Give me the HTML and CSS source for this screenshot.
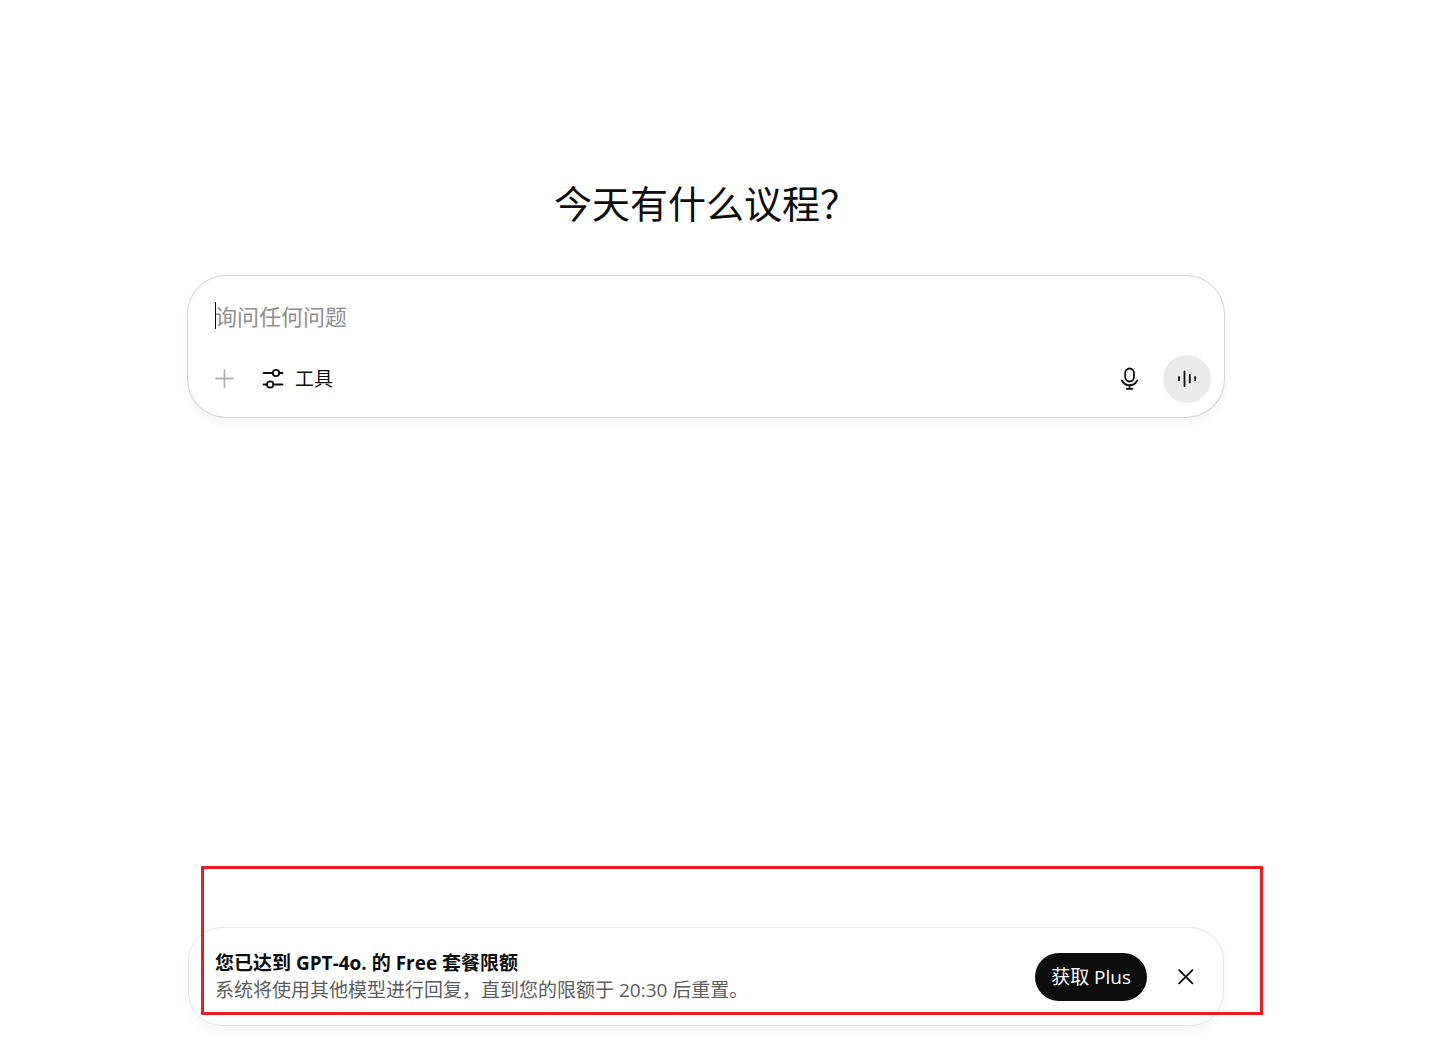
FILE: index.html
```html
<!DOCTYPE html>
<html lang="zh-CN">
<head>
  <meta charset="UTF-8">
  <meta name="viewport" content="width=device-width, initial-scale=1">
  <title>ChatGPT</title>
  <link rel="stylesheet" href="styles.css">
</head>
<body>

  <main class="chat">
    <h1>今天有什么议程？</h1>

    <form class="composer">
      <div class="prompt">
        <textarea rows="1" placeholder="询问任何问题" aria-label="询问任何问题"></textarea>
        <span class="caret"></span>
      </div>

      <div class="actions">
        <button type="button" class="icon-button add" aria-label="添加">
          <svg width="20" height="20" viewBox="0 0 20 20"><path d="M9.500 1V18M1 9.500H18"/></svg>
        </button>
        <button type="button" class="tools">
          <svg width="22" height="22" viewBox="0 0 22 22">
            <path d="M1.500 5H11M17 5H20.500M1.500 16.500H5M11 16.500H20.500"/>
            <circle cx="14" cy="5" r="3.200"/>
            <circle cx="8.200" cy="16.500" r="3.200"/>
          </svg>
          工具
        </button>
        <span class="spacer"></span>
        <button type="button" class="icon-button" aria-label="听写">
          <svg width="24" height="24" viewBox="0 0 24 24">
            <rect x="7.200" y="1.500" width="8.800" height="13" rx="4.400"/>
            <path d="M4 13.500C5.500 16.600 8.200 18.200 11.600 18.200S17.700 16.600 19.200 13.500M11.600 18.200V21.500M8.800 21.800H14.400"/>
          </svg>
        </button>
        <button type="button" class="icon-button voice" aria-label="语音模式">
          <svg width="24" height="24" viewBox="0 0 24 24"><path d="M4 10V13.200M9.500 4.300V19M14.800 8V15.500M20.200 10V13.200"/></svg>
        </button>
      </div>
    </form>

    <section class="banner">
      <div class="message">
        <strong>您已达到 GPT-4o. 的 Free 套餐限额</strong>
        <p>系统将使用其他模型进行回复，直到您的限额于 20:30 后重置。</p>
      </div>
      <button type="button" class="upgrade">获取 Plus</button>
      <button type="button" class="icon-button" aria-label="关闭">
        <svg width="16" height="16" viewBox="0 0 16 16"><path d="M1.200 1.200L14.400 14.400M14.400 1.200L1.200 14.400"/></svg>
      </button>
      <div class="highlight"></div>
    </section>
  </main>

</body>
</html>
```
FILE: styles.css
```css
* {
  box-sizing: border-box;
}

body {
  margin: 0;
  padding-right: 20px;
  background: #fff;
  color: #0d0d0d;
  font-family: "Open Sans", "Noto Sans CJK SC", sans-serif;
  font-size: 19px;
  line-height: 27px;
}

.chat {
  display: flex;
  flex-direction: column;
  max-width: 1036px;
  min-height: 100vh;
  margin: 0 auto;
  padding: 178px 0 36px;
}

h1 {
  margin: 0 0 48px;
  font-size: 38px;
  font-weight: 400;
  line-height: 50px;
  text-align: center;
}

button {
  display: flex;
  align-items: center;
  justify-content: center;
  height: 48px;
  padding: 0;
  border: none;
  border-radius: 24px;
  background: none;
  color: inherit;
  font: inherit;
  cursor: pointer;
}

svg {
  display: block;
  fill: none;
  stroke: currentColor;
  stroke-width: 1.8;
  stroke-linecap: round;
}

.composer {
  padding: 26px 13px 14px;
  border-radius: 38px;
  box-shadow: 0 0 0 1px #d6d6d6, 0 5px 10px rgba(0, 0, 0, 0.05);
}

.prompt {
  position: relative;
  padding: 0 14px 25px;
}

.prompt textarea {
  display: block;
  width: 100%;
  height: 28px;
  padding: 0;
  border: none;
  outline: none;
  resize: none;
  overflow: hidden;
  background: none;
  font: inherit;
  font-size: 22px;
  line-height: 28px;
}

.prompt textarea::placeholder {
  color: #8f8f8f;
}

.caret {
  position: absolute;
  top: 0;
  left: 14px;
  width: 1px;
  height: 27px;
  background: #0d0d0d;
}

.actions {
  display: flex;
}

.icon-button {
  width: 48px;
}

.add {
  color: #b4b4b4;
}

.tools {
  gap: 11px;
  padding: 0 13px;
}

.spacer {
  flex: 1;
}

.voice {
  margin-left: 9px;
  background: #ebebeb;
}

.banner {
  display: flex;
  align-items: center;
  position: relative;
  margin-top: auto;
  padding: 22px 13px 21px 26px;
  border: 1px solid #e5e5e5;
  border-radius: 34px;
  box-shadow: 0 5px 12px rgba(0, 0, 0, 0.04);
}

.message {
  flex: 1;
}

.message strong {
  display: block;
}

.message p {
  margin: 0;
  color: #5d5d5d;
}

.upgrade {
  margin-right: 15px;
  padding: 0 16px;
  background: #0d0d0d;
  color: #fff;
}

/* red frame drawn over the banner */
.highlight {
  position: absolute;
  top: -62px;
  right: -40px;
  bottom: 10px;
  left: 12px;
  border: 3px solid #ed1c24;
  pointer-events: none;
}
```
